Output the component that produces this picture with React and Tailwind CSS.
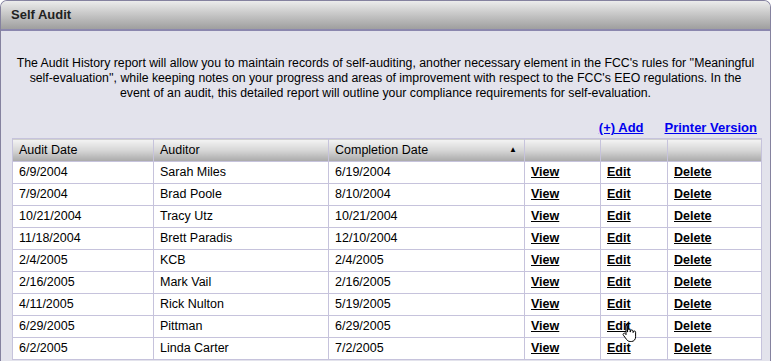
import React from "react";

const rows = [
  ["6/9/2004", "Sarah Miles", "6/19/2004"],
  ["7/9/2004", "Brad Poole", "8/10/2004"],
  ["10/21/2004", "Tracy Utz", "10/21/2004"],
  ["11/18/2004", "Brett Paradis", "12/10/2004"],
  ["2/4/2005", "KCB", "2/4/2005"],
  ["2/16/2005", "Mark Vail", "2/16/2005"],
  ["4/11/2005", "Rick Nulton", "5/19/2005"],
  ["6/29/2005", "Pittman", "6/29/2005"],
  ["6/2/2005", "Linda Carter", "7/2/2005"],
];

const headCell =
  "h-[23px] px-[6px] text-left font-normal border-r border-b border-[#c6c3dc] bg-gradient-to-b from-[#f4f4f4] via-[#d6d6d6] to-[#a9a9a9]";
const cell = "h-[22px] px-[6px] border-r border-b border-[#c6c3dc]";
const link = "font-bold underline text-black";

const HandCursor = () => (
  <svg width="16" height="20" viewBox="0 0 16 20" className="absolute left-[620px] top-[322px]">
    <path
      d="M5 1.5c.8 0 1.4.6 1.4 1.4V9h.2V7.4c0-.8.6-1.3 1.3-1.3s1.3.5 1.3 1.3V9h.2V8.2c0-.8.6-1.3 1.3-1.3s1.3.5 1.3 1.3V9.5h.2V9.2c0-.7.6-1.2 1.2-1.2.7 0 1.2.5 1.2 1.2v4.6c0 2.6-1.7 4.7-4.2 4.7H9.2c-1.6 0-2.7-.7-3.6-2L2.4 12.2c-.5-.6-.4-1.4.2-1.8.6-.4 1.3-.3 1.7.3l.7.9V2.9c0-.8.6-1.4 1.4-1.4z"
      fill="#fff"
      stroke="#000"
      strokeWidth="1"
    />
  </svg>
);

export default function App() {
  return (
    <div className="w-[772px] h-[361px] overflow-hidden bg-white" style={{ fontFamily: "'Liberation Sans', Arial, sans-serif" }}>
      <div className="relative w-[771px] h-[361px] border-x border-t border-[#85829f] rounded-t-[7px] overflow-hidden bg-[#e3e3ec]">
        <div className="h-[30px] flex items-center pl-[10px] border-b-2 border-[#8b87ae] bg-gradient-to-b from-[#ececec] to-[#9f9f9f]">
          <span className="text-[13px] font-bold text-[#222]">Self Audit</span>
        </div>

        <p className="mt-[25px] text-center text-[12.3px] leading-[15px] text-black whitespace-nowrap">
          The Audit History report will allow you to maintain records of self-auditing, another necessary element in the FCC's rules for ''Meaningful
          <br />
          self-evaluation'', while keeping notes on your progress and areas of improvement with respect to the FCC's EEO regulations. In the
          <br />
          event of an audit, this detailed report will outline your compliance requirements for self-evaluation.
        </p>

        <div className="flex justify-end gap-[21px] pr-[13px] mt-[18px] h-[18px] items-center text-[13px] font-bold">
          <a className="text-[#0000ee] underline">(+) Add</a>
          <a className="text-[#0000ee] underline">Printer Version</a>
        </div>

        <table className="ml-[11px] mt-[1px] w-[749px] border-collapse border-l border-t border-[#c6c3dc] text-[12.5px] text-black table-fixed">
          <colgroup>
            <col className="w-[141px]" />
            <col className="w-[175px]" />
            <col className="w-[196px]" />
            <col className="w-[76px]" />
            <col className="w-[67px]" />
            <col className="w-[94px]" />
          </colgroup>
          <thead>
            <tr>
              <th className={headCell}>Audit Date</th>
              <th className={headCell}>Auditor</th>
              <th className={headCell}>
                <div className="flex items-center justify-between">
                  <span>Completion Date</span>
                  <span className="text-[8px] mr-[1px]">▲</span>
                </div>
              </th>
              <th className={headCell}></th>
              <th className={headCell}></th>
              <th className={headCell}></th>
            </tr>
          </thead>
          <tbody className="bg-white">
            {rows.map((r, i) => (
              <tr key={i}>
                <td className={cell}>{r[0]}</td>
                <td className={cell}>{r[1]}</td>
                <td className={cell}>{r[2]}</td>
                <td className={cell}><a className={link}>View</a></td>
                <td className={cell}><a className={link}>Edit</a></td>
                <td className={cell}><a className={link}>Delete</a></td>
              </tr>
            ))}
          </tbody>
        </table>
        <HandCursor />
      </div>
    </div>
  );
}
